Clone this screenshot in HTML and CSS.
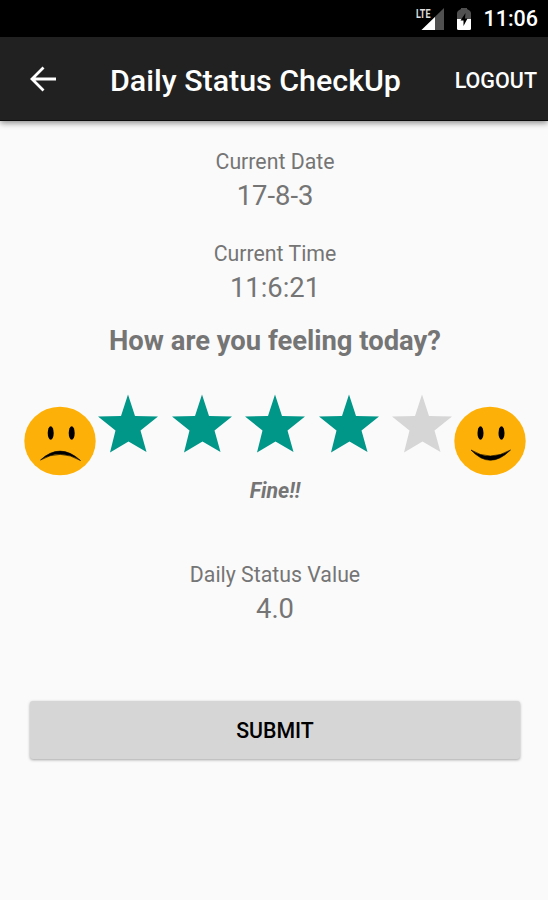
FILE: index.html
```html
<!DOCTYPE html>
<html lang="en">
<head>
  <meta charset="UTF-8">
  <meta name="viewport" content="width=device-width, initial-scale=1.0">
  <title>Daily Status CheckUp</title>
  <link rel="stylesheet" href="styles.css">
</head>
<body>
  <div class="status-bar">
    <svg class="signal-icon" width="28" height="26" viewBox="0 0 28 26">
      <path d="M28 2V24H5.500z" fill="#505050"/>
      <path d="M19 11V24H5.500z" fill="#fff"/>
      <path d="M0 1H15V13.500H0z" fill="#000"/>
      <text class="lte" x="0" y="12" textLength="14.500" lengthAdjust="spacingAndGlyphs">LTE</text>
    </svg>
    <svg class="battery-icon" width="16" height="24" viewBox="0 0 16 24">
      <path d="M1 12V6Q1 4.500 2.500 3.500L5 2V1h6v1l2.500 1.500Q15 4.500 15 6V12z" fill="#505050"/>
      <path d="M1 12h14v9.500q0 1.500-1.500 1.500h-11Q1 23 1 21.500z" fill="#fff"/>
      <path d="M9.500 6L4.500 13.500h3V19L11.500 11.500H9z" fill="#000"/>
    </svg>
    <span class="clock">11:06</span>
  </div>

  <header class="app-bar">
    <svg class="back-icon" width="28" height="28" viewBox="0 0 28 28">
      <path d="M27 14H3M14.500 2.500L3 14l11.500 11.500" fill="none" stroke="#fff" stroke-width="2.800"/>
    </svg>
    <h1>Daily Status CheckUp</h1>
    <a class="logout">LOGOUT</a>
  </header>

  <main>
    <div class="field">
      <div class="label">Current Date</div>
      <div class="value">17-8-3</div>
    </div>
    <div class="field">
      <div class="label">Current Time</div>
      <div class="value">11:6:21</div>
    </div>

    <h2>How are you feeling today?</h2>

    <svg width="0" height="0" class="defs">
      <symbol id="star" viewBox="0 0 60 60">
        <path d="M30 .5L37 22 60 22.500 42.500 36.500 48.500 58 30.500 47.500 12 58.500 17.500 36.500 0 22.500 23 22z"/>
      </symbol>
    </svg>

    <div class="rating">
      <svg class="face" width="72" height="70" viewBox="0 0 72 70">
        <ellipse cx="36" cy="35" rx="35.700" ry="34.300" fill="#fdb108"/>
        <ellipse cx="26.700" cy="27" rx="3" ry="6.800"/>
        <ellipse cx="47.700" cy="27" rx="3" ry="6.800"/>
        <path d="M16.500 54Q36 36 56.500 54.500 36 42.500 16.500 54z" stroke="#000" stroke-width=".6"/>
      </svg>
      <div class="stars">
        <svg class="star on"><use href="#star"/></svg>
        <svg class="star on"><use href="#star"/></svg>
        <svg class="star on"><use href="#star"/></svg>
        <svg class="star on"><use href="#star"/></svg>
        <svg class="star"><use href="#star"/></svg>
      </div>
      <svg class="face" width="72" height="70" viewBox="0 0 72 70">
        <ellipse cx="36" cy="35" rx="35.700" ry="34.300" fill="#fdb108"/>
        <ellipse cx="26.500" cy="27" rx="3" ry="6.800"/>
        <ellipse cx="47.500" cy="27" rx="3" ry="6.800"/>
        <path d="M17 44Q36 56 56.500 44 36 64.500 17 44z" stroke="#000" stroke-width=".6"/>
      </svg>
    </div>

    <p class="feeling">Fine!!</p>

    <div class="field">
      <div class="label">Daily Status Value</div>
      <div class="value">4.0</div>
    </div>

    <button class="submit" type="button">SUBMIT</button>
  </main>
</body>
</html>
```

FILE: styles.css
```css
* {
  box-sizing: border-box;
}
body {
  margin: 0;
  min-height: 900px;
  background: #fafafa;
  color: #757575;
  font-family: Roboto, sans-serif;
}
.status-bar {
  display: flex;
  align-items: center;
  justify-content: flex-end;
  height: 37px;
  padding-right: 10px;
  background: #000;
  color: #fff;
}
.lte {
  font-size: 13.5px;
  font-weight: 700;
  fill: #ddd;
}
.battery-icon {
  margin: 1px 11px 0 12px;
}
.clock {
  font-size: 21.5px;
  font-weight: 500;
  line-height: 36px;
}
.app-bar {
  display: flex;
  align-items: center;
  height: 84px;
  padding: 1px 11px 0 29px;
  background: #212121;
  border-bottom: 1px solid #0c0c0c;
  box-shadow: 0 2px 6px rgba(0, 0, 0, 0.45);
  color: #fff;
}
h1 {
  margin: 3px 0 0 53px;
  font-size: 30.4px;
  font-weight: 500;
  white-space: nowrap;
}
.logout {
  margin: 2px 0 0 auto;
  font-size: 21.5px;
  font-weight: 500;
}
main {
  display: flex;
  flex-direction: column;
  align-items: center;
  padding: 26px 28px 0 30px;
}
.field {
  height: 92px;
  text-align: center;
}
.label {
  font-size: 21.3px;
  line-height: 30px;
}
.value {
  font-size: 27.4px;
  line-height: 39px;
}
h2 {
  margin: -6px 0 0;
  font-size: 27.4px;
  line-height: 33px;
  font-weight: 700;
}
.defs {
  position: absolute;
}
.rating {
  display: flex;
  align-items: flex-end;
  gap: 2px;
  width: 502px;
  height: 82px;
  margin-top: 36px;
}
.face {
  flex: none;
}
.stars {
  display: flex;
  flex: 1;
  justify-content: space-between;
  align-self: flex-start;
}
.star {
  width: 60px;
  height: 60px;
  fill: #d6d6d6;
}
.star.on {
  fill: #009688;
}
.feeling {
  margin: 0 0 54px;
  font-size: 21.3px;
  line-height: 30px;
  font-weight: 700;
  font-style: italic;
}
.submit {
  width: 490px;
  height: 58px;
  margin-top: 49px;
  border: none;
  border-radius: 3px;
  background: #d6d6d6;
  box-shadow: 0 1px 3px rgba(0, 0, 0, 0.35);
  color: #000;
  font-family: inherit;
  font-size: 21.3px;
  font-weight: 500;
}
```
